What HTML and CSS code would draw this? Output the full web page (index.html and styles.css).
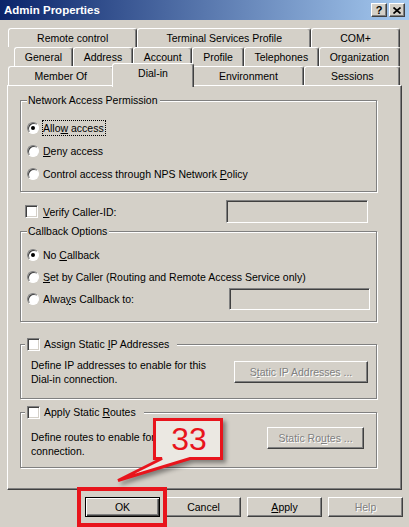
FILE: index.html
```html
<!DOCTYPE html>
<html lang="en">
<head>
  <meta charset="UTF-8" />
  <meta name="viewport" content="width=device-width, initial-scale=1.0">
  <title>Admin Properties</title>
  <link rel="stylesheet" href="styles.css">
</head>
<body>
  <div class="titlebar">
    <span class="title">Admin Properties</span>
    <div class="caption-btns">
      <span class="cbtn">?</span>
      <span class="cbtn">
        <svg width="8" height="7" viewBox="0 0 8 7"><path d="M0.5 0.5 L7.5 6.5 M7.5 0.5 L0.5 6.5" stroke="#000" stroke-width="1.7" fill="none"/></svg>
      </span>
    </div>
  </div>

  <div class="tabs">
    <div class="tab-row">
      <span class="tab">Remote control</span>
      <span class="tab">Terminal Services Profile</span>
      <span class="tab">COM+</span>
    </div>
    <div class="tab-row middle">
      <span class="tab">General</span>
      <span class="tab">Address</span>
      <span class="tab">Account</span>
      <span class="tab">Profile</span>
      <span class="tab">Telephones</span>
      <span class="tab">Organization</span>
    </div>
    <div class="tab-row">
      <span class="tab">Member Of</span>
      <span class="tab active">Dial-in</span>
      <span class="tab">Environment</span>
      <span class="tab">Sessions</span>
    </div>
  </div>

  <div class="panel">
    <div class="group access">
      <div class="legend">Network Access Permission</div>
      <div class="options">
        <div class="opt"><span class="radio on"></span><span class="focus">Allo<u>w</u> access</span></div>
        <div class="opt"><span class="radio"></span><span><u>D</u>eny access</span></div>
        <div class="opt"><span class="radio"></span><span>Control access through NPS Network <u>P</u>olicy</span></div>
      </div>
    </div>

    <div class="field-row">
      <div class="chk-label"><span class="check"></span><span><u>V</u>erify Caller-ID:</span></div>
      <input class="textbox verify" type="text" disabled>
    </div>

    <div class="group callback">
      <div class="legend">Callback Options</div>
      <div class="options">
        <div class="opt short"><span class="radio on"></span><span>No <u>C</u>allback</span></div>
        <div class="opt short"><span class="radio"></span><span><u>S</u>et by Caller (Routing and Remote Access Service only)</span></div>
        <div class="opt short"><span class="radio"></span><span>Alwa<u>y</u>s Callback to:</span><input class="textbox always" type="text" disabled></div>
      </div>
    </div>

    <div class="group static-ip">
      <div class="legend chk-legend"><span class="check"></span><span>Assign Static <u>I</u>P Addresses</span></div>
      <div class="desc-row">
        <div class="desc">Define IP addresses to enable for this<br>Dial-in connection.</div>
        <button class="btn wide" disabled>S<u>t</u>atic IP Addresses ...</button>
      </div>
    </div>

    <div class="group routes">
      <div class="legend chk-legend"><span class="check"></span><span>Apply Static <u>R</u>outes</span></div>
      <div class="desc-row top">
        <div class="desc">Define routes to enable for this Dial-in<br>connection.</div>
        <button class="btn routes-btn" disabled>Static Ro<u>u</u>tes ...</button>
      </div>
    </div>
  </div>

  <div class="actions">
    <button class="btn default">OK</button>
    <button class="btn">Cancel</button>
    <button class="btn"><u>A</u>pply</button>
    <button class="btn" disabled>Help</button>
  </div>

  <div class="mark"></div>
  <svg class="callout" width="125" height="80" viewBox="0 0 125 80">
    <path class="bubble" d="M44.5 9.5 H111.5 V48.5 H80 L8 70.5 L52 48.5 H44.5 Z"/>
    <text x="79" y="40" text-anchor="middle">33</text>
  </svg>
</body>
</html>
```

FILE: styles.css
```css
body {
  margin: 0;
  width: 409px;
  height: 527px;
  overflow: hidden;
  position: relative;
  background: #d4d0c8;
  font-family: "Liberation Sans", Arial, sans-serif;
  font-size: 10.5px;
  color: #000;
}

/* title bar */
.titlebar {
  height: 20px;
  display: flex;
  align-items: center;
  padding: 0 4px 0 4px;
  background: linear-gradient(to right, #0a246a, #a6caf0);
}
.title {
  color: #fff;
  font-weight: bold;
  font-size: 11.5px;
}
.caption-btns {
  margin-left: auto;
  display: flex;
  gap: 2px;
}
.cbtn {
  width: 16px;
  height: 14px;
  box-sizing: border-box;
  background: #d4d0c8;
  border: 1px solid;
  border-color: #fff #404040 #404040 #fff;
  box-shadow: inset -1px -1px #808080;
  display: flex;
  align-items: center;
  justify-content: center;
  font-weight: bold;
  font-size: 11px;
}

/* tabs */
.tabs {
  margin-top: 8px;
}
.tab-row {
  display: flex;
  height: 19px;
  padding: 0 9px 0 8px;
}
.tab-row.middle {
  padding-left: 14px;
}
.tab {
  flex: 1 1 auto;
  height: 19px;
  box-sizing: border-box;
  padding: 0 8px;
  border: 1px solid;
  border-bottom: none;
  border-color: #fff #404040 #404040 #fff;
  box-shadow: inset -1px 0 #808080;
  border-radius: 3px 3px 0 0;
  background: #d4d0c8;
  text-align: center;
  line-height: 18px;
  white-space: nowrap;
}
.tab.active {
  height: 24px;
  margin: -3px -2px 0;
  position: relative;
  z-index: 1;
}

/* page of the dialog */
.panel {
  margin: 0 7px;
  height: 405px;
  box-sizing: border-box;
  border: 1px solid;
  border-color: #fff #404040 #404040 #fff;
  box-shadow: inset -1px -1px #808080;
  padding: 14px 0 0 12px;
}
.group {
  width: 357px;
  box-sizing: border-box;
  border: 1px solid #808080;
  box-shadow: inset 1px 1px #fff, 1px 1px #fff;
}
.group.access {
  height: 92px;
}
.group.callback {
  height: 91px;
  margin-top: 8px;
}
.group.static-ip {
  height: 55px;
  margin-top: 22px;
}
.group.routes {
  height: 56px;
  margin-top: 13px;
}
.legend {
  width: fit-content;
  height: 13px;
  line-height: 13px;
  margin: -7px 0 0 6px;
  padding: 0 2px 0 1px;
  background: #d4d0c8;
  white-space: nowrap;
}
.chk-legend {
  display: flex;
  align-items: center;
  gap: 4px;
  margin-left: 4px;
  padding: 0 8px 0 2px;
}
.options {
  margin-top: 9px;
}
.callback .options {
  margin-top: 6px;
}
.opt {
  display: flex;
  align-items: center;
  gap: 4px;
  height: 23px;
  padding: 0 6px;
  white-space: nowrap;
}
.opt.short {
  height: 22px;
}
.focus {
  line-height: 12px;
  padding: 1px 1px 1px 0;
  margin-left: -1px;
  border: 1px dotted #000;
}

.field-row {
  display: flex;
  align-items: center;
  justify-content: space-between;
  width: 348px;
  height: 23px;
  box-sizing: border-box;
  margin-top: 8px;
  padding-left: 5px;
}
.chk-label {
  display: flex;
  align-items: center;
  gap: 5px;
}

.radio {
  flex: none;
  width: 12px;
  height: 12px;
  box-sizing: border-box;
  border-radius: 50%;
  background: #fff;
  border: 1px solid;
  border-color: #808080 #fff #fff #808080;
  box-shadow: inset 1px 1px #404040;
  display: flex;
  align-items: center;
  justify-content: center;
}
.radio.on::after {
  content: "";
  width: 4px;
  height: 4px;
  border-radius: 50%;
  background: #000;
}
.check {
  flex: none;
  width: 13px;
  height: 13px;
  box-sizing: border-box;
  background: #fff;
  border: 1px solid;
  border-color: #808080 #fff #fff #808080;
  box-shadow: inset 1px 1px #404040, inset -1px -1px #d4d0c8;
}
.textbox {
  margin: 0;
  padding: 0;
  box-sizing: border-box;
  background: #d4d0c8;
  border: 1px solid;
  border-color: #808080 #fff #fff #808080;
  box-shadow: inset 1px 1px #404040, inset -1px -1px #d4d0c8;
}
.textbox.verify {
  width: 142px;
  height: 23px;
}
.textbox.always {
  width: 141px;
  height: 22px;
  margin-left: auto;
}

.desc-row {
  display: flex;
  align-items: center;
  justify-content: space-between;
  margin-top: 7px;
  padding: 0 8px 0 10px;
}
.desc-row.top {
  align-items: flex-start;
  margin-top: 8px;
  padding-right: 12px;
}
.desc {
  line-height: 14px;
  white-space: nowrap;
}
.desc-row.top .desc {
  margin-top: 3px;
}

/* buttons */
.btn {
  width: 75px;
  height: 20px;
  margin: 0;
  padding: 0;
  box-sizing: border-box;
  background: #d4d0c8;
  border: 1px solid;
  border-color: #fff #404040 #404040 #fff;
  box-shadow: inset -1px -1px #808080;
  font: inherit;
  color: #000;
}
.btn:disabled {
  color: #808080;
  text-shadow: 1px 1px #fff;
}
.btn.wide {
  width: 134px;
  height: 22px;
}
.btn.routes-btn {
  width: 97px;
  height: 22px;
}
.btn.default {
  border-color: #000;
  box-shadow: inset 1px 1px #fff, inset -1px -1px #404040, inset -2px -2px #808080;
}
.actions {
  display: flex;
  justify-content: flex-end;
  gap: 6px;
  padding: 7px 6px 0 0;
}

/* red annotation */
.mark {
  position: absolute;
  left: 77px;
  top: 487px;
  width: 90px;
  height: 40px;
  box-sizing: border-box;
  border: 4px solid #e8141c;
}
.callout {
  position: absolute;
  left: 110px;
  top: 410px;
  overflow: visible;
}
.bubble {
  fill: #ebe8e2;
  stroke: #e8141c;
  stroke-width: 3;
  filter: drop-shadow(3px 3px 2px rgba(0, 0, 0, 0.4));
}
.callout text {
  fill: #e8141c;
  font-family: "Liberation Sans", Arial, sans-serif;
  font-size: 32px;
}
```
